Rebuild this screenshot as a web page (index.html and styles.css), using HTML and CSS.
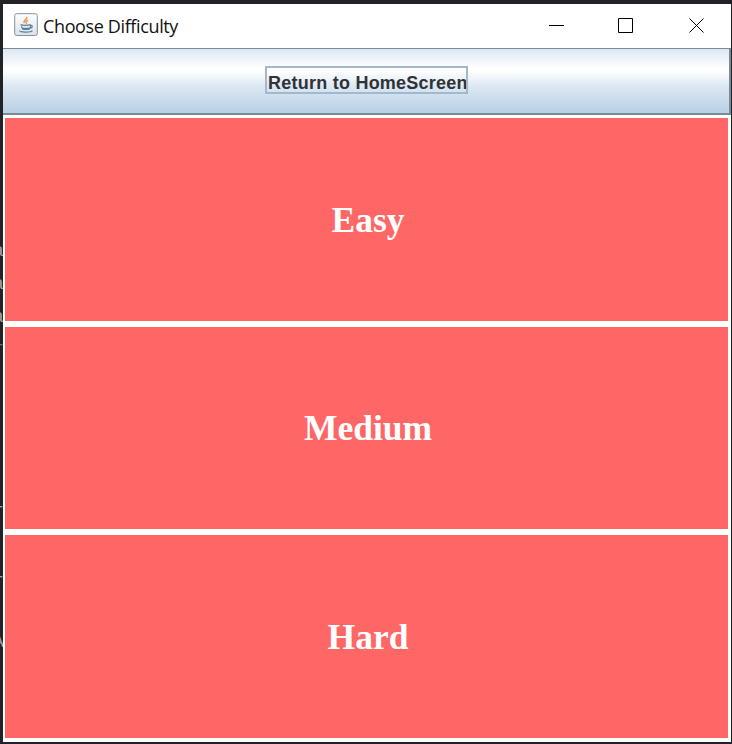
FILE: index.html
```
<!DOCTYPE html>
<html lang="en">
<head>
<meta charset="utf-8">
<title>Choose Difficulty</title>
<link rel="stylesheet" href="styles.css">
</head>
<body>
<div class="backdrop" aria-hidden="true">
  <span class="code c1">a</span><span class="code c2">a</span><span class="code c3">a</span><span class="code c4 gold">r</span><span class="code c5">r</span><span class="code c6">r</span><span class="code c7">A</span>
</div>
<main class="window">
  <header class="titlebar">
    <svg class="java" width="24" height="24" viewBox="0 0 24 24" fill="none">
      <defs><linearGradient id="tile" x1="0" y1="0" x2="0" y2="1"><stop stop-color="#fff"/><stop offset="1" stop-color="#dce2e9"/></linearGradient></defs>
      <rect x=".7" y=".7" width="22.6" height="21.8" rx="2" fill="url(#tile)" stroke="#8592a2"/>
      <path d="M12.8 4c1 2.300-4.300 3.300-2.400 6M14.300 7.300c-3 1.100-2.700 2-1.500 3.400" stroke="#e89a50" stroke-width="1.500"/>
      <path d="M6.500 11.600c2 1 7.500 1 10 0M7.500 13.200c.5 3 1 3.300 4.500 3.300s4-.5 4.500-3.300M16 12.500c3-.8 3 2.500-.3 2.700M5.500 17.500c-.5 2 11 2.300 13 .2M8 15c2 .5 5 .5 7 0" stroke="#597f9e" stroke-width="1.200"/>
    </svg>
    <h1>Choose Difficulty</h1>
    <div class="controls">
      <svg width="16" height="16" viewBox="0 0 16 16"><path d="M0 7.500h15" stroke="#000"/></svg>
      <svg width="16" height="16" viewBox="0 0 16 16"><path d="M.5.500h14v14H.5z" stroke="#000" fill="none"/></svg>
      <svg width="16" height="16" viewBox="0 0 16 16"><path d="M.5.500l14 14M14.500 .5L.5 14.500" stroke="#000"/></svg>
    </div>
  </header>
  <nav class="menubar"><button class="home">Return to HomeScreen</button></nav>
  <section class="choices">
    <button class="choice">Easy</button>
    <button class="choice">Medium</button>
    <button class="choice">Hard</button>
  </section>
</main>
</body>
</html>
```
FILE: styles.css
```
* { box-sizing: border-box; }
body { position: relative; margin: 0; width: 732px; height: 744px; padding: 4px 1px 2px 3px; background: #222326; overflow: hidden; }
.backdrop { position: absolute; inset: 0 auto 0 0; width: 3px; overflow: hidden; }
.code { position: absolute; right: -1px; color: #a0a3a6; font: 19px/20px "Liberation Mono", monospace; }
.gold { color: #80704c; }
.c1 { top: 241px; } .c2 { top: 274px; } .c3 { top: 307px; } .c4 { top: 339px; } .c5 { top: 501px; } .c6 { top: 571px; } .c7 { top: 632px; }
.window { position: relative; display: flex; flex-direction: column; width: 728px; height: 738px; background: #fff; }
.titlebar { display: flex; align-items: center; height: 44px; padding: 0 26px 0 11px; }
.java { margin-top: -3px; }
h1 { margin: 0 0 0 5px; font: 400 18px/24px "Open Sans", sans-serif; letter-spacing: -.37px; color: #111; white-space: nowrap; }
.controls { display: flex; gap: 54px; margin-left: auto; }
.controls svg { display: block; }
.controls svg:nth-child(2) { margin: 0 1px 0 -1px; }
.menubar { display: flex; justify-content: center; height: 67px; padding-top: 17px; border: solid #7b8a99; border-width: 1px 2px 2px 0; background: linear-gradient(#dde7f3 0, #fff 31%, #fff 34%, #dce8f3 58%, #b9d0e5 100%); }
.home { width: 203px; height: 28px; margin-left: 1px; padding: 4px 0 0 1px; border: 2px solid #a3b8cc; background: transparent; color: #303236; font: bold 18px/22px "Liberation Sans", sans-serif; letter-spacing: .24px; text-align: left; white-space: nowrap; overflow: hidden; }
.choices { display: grid; flex: 1; grid-template-rows: 203px 202px 203px; gap: 6px; padding: 3px 3px 4px 2px; }
.choice { display: flex; align-items: center; justify-content: center; border: 0; padding: 0 0 0 3px; background: #f66; color: #fff; font: bold 35.500px/40px "Liberation Serif", serif; }
```
